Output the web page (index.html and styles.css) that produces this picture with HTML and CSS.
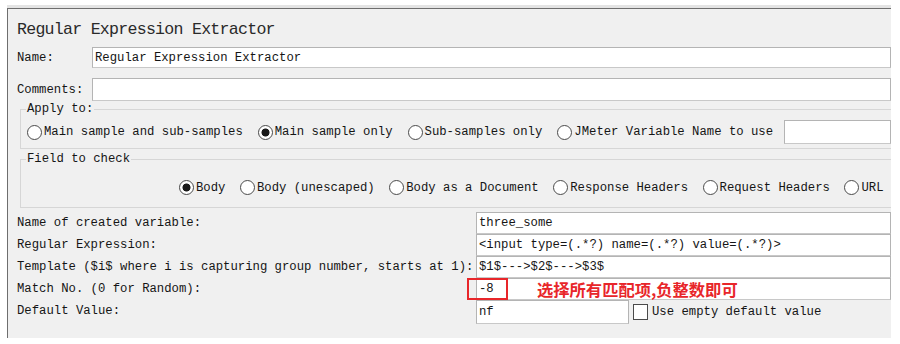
FILE: index.html
```html
<!DOCTYPE html>
<html>
<head>
<meta charset="utf-8">
<link rel="stylesheet" href="styles.css">
</head>
<body>
<div class="frame">
  <div class="panel">
    <div class="title">Regular Expression Extractor</div>
    <div class="row name-row">
      <span class="lbl w75">Name:</span>
      <div class="field">Regular Expression Extractor</div>
    </div>
    <div class="row comments-row">
      <span class="lbl w75">Comments:</span>
      <div class="field"></div>
    </div>
    <fieldset class="group apply">
      <legend>Apply to:</legend>
      <div class="radios">
        <span class="opt"><span class="radio"></span>Main sample and sub-samples</span>
        <span class="opt"><span class="radio on"></span>Main sample only</span>
        <span class="opt"><span class="radio"></span>Sub-samples only</span>
        <span class="opt"><span class="radio"></span>JMeter Variable Name to use</span>
        <div class="field varname"></div>
      </div>
    </fieldset>
    <fieldset class="group check">
      <legend>Field to check</legend>
      <div class="radios fields">
        <span class="opt"><span class="radio on"></span>Body</span>
        <span class="opt"><span class="radio"></span>Body (unescaped)</span>
        <span class="opt"><span class="radio"></span>Body as a Document</span>
        <span class="opt"><span class="radio"></span>Response Headers</span>
        <span class="opt"><span class="radio"></span>Request Headers</span>
        <span class="opt"><span class="radio"></span>URL</span>
      </div>
    </fieldset>
    <div class="form">
      <span class="lbl">Name of created variable:</span>
      <div class="field">three_some</div>
      <span class="lbl">Regular Expression:</span>
      <div class="field">&lt;input type=(.*?) name=(.*?) value=(.*?)&gt;</div>
      <span class="lbl">Template ($i$ where i is capturing group number, starts at 1):</span>
      <div class="field">$1$---&gt;$2$---&gt;$3$</div>
      <span class="lbl">Match No. (0 for Random):</span>
      <div class="field match">-8<span class="redbox"></span><span class="note">选择所有匹配项,负整数即可</span></div>
      <span class="lbl">Default Value:</span>
      <div class="default-row">
        <div class="field short">nf</div>
        <span class="check-opt"><span class="checkbox"></span>Use empty default value</span>
      </div>
    </div>
  </div>
</div>
</body>
</html>
```
FILE: styles.css
```css
html, body {
  margin: 0;
  padding: 0;
  background: #ffffff;
}
body {
  font-family: "Liberation Mono", "Noto Sans CJK SC", monospace;
  font-size: 12.27px;
  color: #151515;
}
.frame {
  margin: 5px 0 0 7px;
  width: 884px;
  padding-top: 3px;
  background: #e4e4e4;
}
.panel {
  position: relative;
  height: 330px;
  background: #f0f0f0;
  border-top: 1px solid #6e6e6e;
  border-left: 1px solid #6e6e6e;
  overflow: hidden;
  padding-left: 9px;
  box-sizing: border-box;
}
.title {
  margin-top: 9px;
  height: 24px;
  line-height: 24px;
  font-size: 16.6px;
  letter-spacing: -0.75px;
  color: #2a2a2a;
}
.row {
  display: flex;
  align-items: center;
}
.name-row {
  margin-top: 5px;
  height: 21px;
}
.comments-row {
  margin-top: 10px;
  height: 23px;
}
.w75 {
  width: 75px;
  flex: none;
}
.field {
  box-sizing: border-box;
  height: 100%;
  flex: 1;
  background: #ffffff;
  border: 1px solid #b4b4b4;
  border-bottom-color: #c8c8c8;
  padding-left: 2px;
  display: flex;
  align-items: center;
  white-space: nowrap;
  min-width: 0;
}
.group {
  margin: 0 0 0 3px;
  padding: 0 0 0 5px;
  border: 1px solid #d6d6d6;
  border-right: none;
  min-width: 0;
}
.group legend {
  padding: 0 1px;
  height: 14px;
  line-height: 14px;
  margin-left: 0;
}
.apply {
  margin-top: 1px;
}
.check {
  margin-top: 3px;
}
.radios {
  display: flex;
  align-items: center;
  white-space: nowrap;
}
.apply .radios {
  height: 32px;
  padding-left: 1px;
}
.check .radios {
  height: 39px;
  padding-top: 2px;
  padding-left: 153px;
}
.opt {
  display: inline-flex;
  align-items: center;
  margin-right: 15px;
}
.fields .opt {
  margin-right: 14.5px;
}
.radio {
  width: 13px;
  height: 13px;
  border: 1px solid #4a4a4a;
  border-radius: 50%;
  background: #ffffff;
  margin-right: 2px;
  flex: none;
  box-sizing: content-box;
}
.radio.on {
  background: radial-gradient(circle, #1a1a1a 0, #1a1a1a 3.6px, #ffffff 4.4px);
}
.varname {
  height: 24px;
  margin-left: -4px;
}
.form {
  margin-top: 4px;
  display: grid;
  grid-template-columns: 459px 1fr;
  grid-auto-rows: 22px;
  align-items: center;
}
.form .field {
  height: 22px;
}
.lbl {
  white-space: nowrap;
}
.match {
  position: relative;
  overflow: visible;
}
.redbox {
  position: absolute;
  left: -10px;
  top: -1px;
  width: 37px;
  height: 18px;
  border: 2px solid #e8262a;
}
.note {
  position: absolute;
  left: 60px;
  top: 0;
  height: 20px;
  line-height: 20px;
  font-family: "Noto Sans CJK SC", sans-serif;
  font-weight: 700;
  font-size: 16.3px;
  color: #e8262a;
}
.default-row {
  display: flex;
  align-items: center;
  height: 24px;
  align-self: start;
}
.form .field.short {
  flex: none;
  width: 153px;
  height: 24px;
}
.check-opt {
  display: inline-flex;
  align-items: center;
  margin-left: 4px;
}
.checkbox {
  width: 13px;
  height: 14px;
  border: 1px solid #4a4a4a;
  background: #ffffff;
  margin-right: 4px;
}
```
